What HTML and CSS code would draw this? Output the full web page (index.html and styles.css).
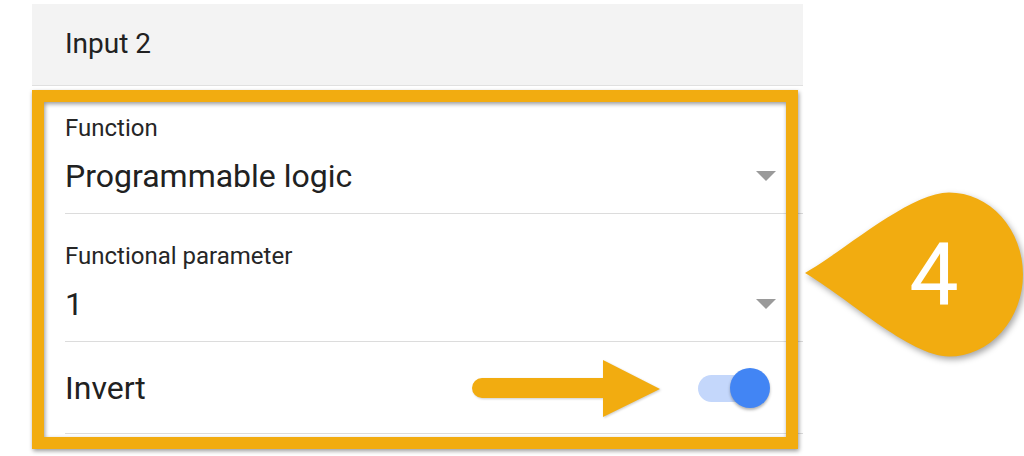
FILE: index.html
```html
<!DOCTYPE html>
<html lang="en">
<head>
    <meta charset="UTF-8">
    <meta name="viewport" content="width=device-width, initial-scale=1.0">
    <title>Input 2 settings</title>
    <link rel="stylesheet" href="styles.css">
</head>
<body>
    <div class="page">
        <div class="card">
            <div class="card-header">Input 2</div>
            <div class="field">
                <div class="field-label">Function</div>
                <div class="field-value">
                    <span>Programmable logic</span>
                    <span class="caret"></span>
                </div>
            </div>
            <div class="field">
                <div class="field-label">Functional parameter</div>
                <div class="field-value">
                    <span>1</span>
                    <span class="caret"></span>
                </div>
            </div>
            <div class="field field-switch">
                <span>Invert</span>
                <span class="switch" aria-label="Invert on">
                    <span class="switch-track"></span>
                    <span class="switch-thumb"></span>
                </span>
            </div>
        </div>

        <!-- annotation layer -->
        <div class="highlight"></div>
        <svg class="pointer-arrow" width="194" height="62" viewBox="0 0 194 62">
            <path d="M12 20 H133 V2 L190 31 L133 59 V40 H12 A10 10 0 0 1 12 20 Z"/>
        </svg>
        <svg class="callout" width="224" height="200" viewBox="0 0 224 200">
            <path d="M5 93 C45 70 110 12.5 149 12.5 A74 82 0 0 1 149 176.5 C110 176.5 45 116 5 93 Z"/>
            <text x="134" y="124" text-anchor="middle">4</text>
        </svg>
    </div>
</body>
</html>
```

FILE: styles.css
```css
body {
    margin: 0;
    font-family: Roboto, "Liberation Sans", sans-serif;
    background-color: #fff;
    color: #212121;
}
.page {
    position: relative;
    width: 1024px;
    height: 456px;
    overflow: hidden;
}
.card {
    width: 771px;
    margin: 4px 0 0 32px;
    background-color: #fff;
}
.card-header {
    background-color: #f3f3f3;
    border-bottom: 1px solid #e0e0e0;
    padding: 23px 33px 25px;
    font-size: 28px;
    line-height: 33px;
}
.field {
    margin-left: 33px;
    padding: 28px 27px 18px 0;
    border-bottom: 1px solid #dcdcdc;
}
.field-label {
    font-size: 24px;
    line-height: 28px;
    color: #262626;
}
.field-value {
    display: flex;
    justify-content: space-between;
    align-items: center;
    margin-top: 15px;
    font-size: 32px;
    line-height: 38px;
}
.caret {
    width: 0;
    height: 0;
    border-left: 10px solid transparent;
    border-right: 10px solid transparent;
    border-top: 10px solid #9a9a9a;
}
.field-switch {
    display: flex;
    justify-content: space-between;
    align-items: center;
    height: 92px;
    padding-top: 0;
    padding-bottom: 0;
    font-size: 32px;
    line-height: 38px;
    box-sizing: border-box;
}
.switch {
    position: relative;
    width: 72px;
    height: 40px;
    margin-right: 6px;
}
.switch-track {
    position: absolute;
    left: 0;
    top: 7px;
    width: 68px;
    height: 27px;
    border-radius: 14px;
    background-color: #c4d7fb;
}
.switch-thumb {
    position: absolute;
    right: 0;
    top: 0;
    width: 40px;
    height: 40px;
    border-radius: 50%;
    background-color: #4285f4;
    box-shadow: 0 2px 3px rgba(0, 0, 0, 0.3);
}
.highlight {
    position: absolute;
    left: 32px;
    top: 90px;
    width: 766px;
    height: 359px;
    box-sizing: border-box;
    border: 12px solid #f2ac10;
    filter: drop-shadow(1px 2px 2px rgba(0, 0, 0, 0.4));
}
.pointer-arrow {
    position: absolute;
    left: 470px;
    top: 358px;
    fill: #f2ac10;
    filter: drop-shadow(1px 1px 1px rgba(0, 0, 0, 0.2));
}
.callout {
    position: absolute;
    left: 800px;
    top: 180px;
    overflow: visible;
    fill: #f2ac10;
    filter: drop-shadow(2px 3px 3px rgba(0, 0, 0, 0.35));
}
.callout text {
    fill: #fff;
    font-family: Roboto, "Liberation Sans", sans-serif;
    font-size: 88px;
}
```
